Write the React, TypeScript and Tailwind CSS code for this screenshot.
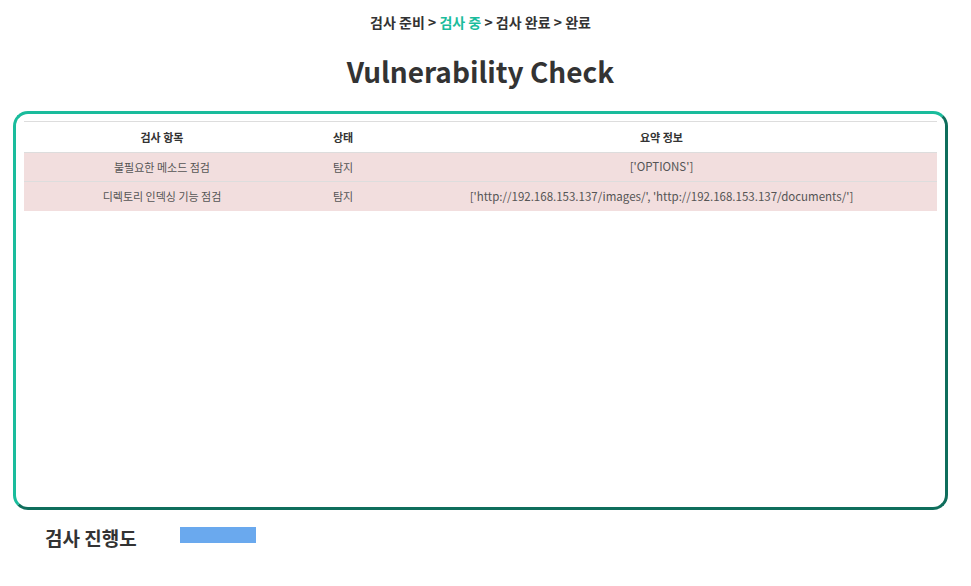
import React from "react";

const rows = [
  { item: "불필요한 메소드 점검", status: "탐지", info: "['OPTIONS']" },
  {
    item: "디렉토리 인덱싱 기능 점검",
    status: "탐지",
    info: "['http://192.168.153.137/images/', 'http://192.168.153.137/documents/']",
  },
];

export default function App() {
  return (
    <div
      className="min-h-screen w-[961px] bg-white text-[#333]"
      style={{ fontFamily: '"Noto Sans CJK KR", "Noto Sans", sans-serif' }}
    >
      {/* 진행 단계 */}
      <div className="pt-[11px] text-center text-[14px] font-bold leading-[22px]">
        검사 준비 &gt; <span className="text-[#1abc9c]">검사 중</span> &gt; 검사 완료 &gt; 완료
      </div>

      <h1 className="mt-[18px] text-center text-[28px] font-bold leading-[40px]">
        Vulnerability Check
      </h1>

      <div className="mx-[13px] mt-[20px] h-[399px] rounded-[15px] border-[3px] border-t-[#1abc9c] border-l-[#1abc9c] border-r-[#0f6e5c] border-b-[#0f6e5c] px-[8px] pt-[7px]">
        <table className="w-full border-collapse text-[11px]">
          <thead>
            <tr className="border-t border-[#ddd]">
              <th className="h-[31px] w-[276px] text-center font-bold">검사 항목</th>
              <th className="h-[31px] w-[86px] text-center font-bold">상태</th>
              <th className="h-[31px] text-center font-bold">요약 정보</th>
            </tr>
          </thead>
          <tbody>
            {rows.map((r) => (
              <tr key={r.item} className="border-t border-[#ddd] bg-[#f2dede] text-[#555]">
                <td className="h-[29px] text-center">{r.item}</td>
                <td className="h-[29px] text-center">{r.status}</td>
                <td className="h-[29px] text-center text-[11.5px]">{r.info}</td>
              </tr>
            ))}
          </tbody>
        </table>
      </div>

      {/* 진행도 */}
      <div className="mt-[15px] flex items-start pl-[45px]">
        <span className="text-[19px] font-bold leading-[26px]">검사 진행도</span>
        <div className="ml-[43px] mt-[2px] h-[16px] w-[76px] bg-[#6aa9ee]" />
      </div>
    </div>
  );
}
